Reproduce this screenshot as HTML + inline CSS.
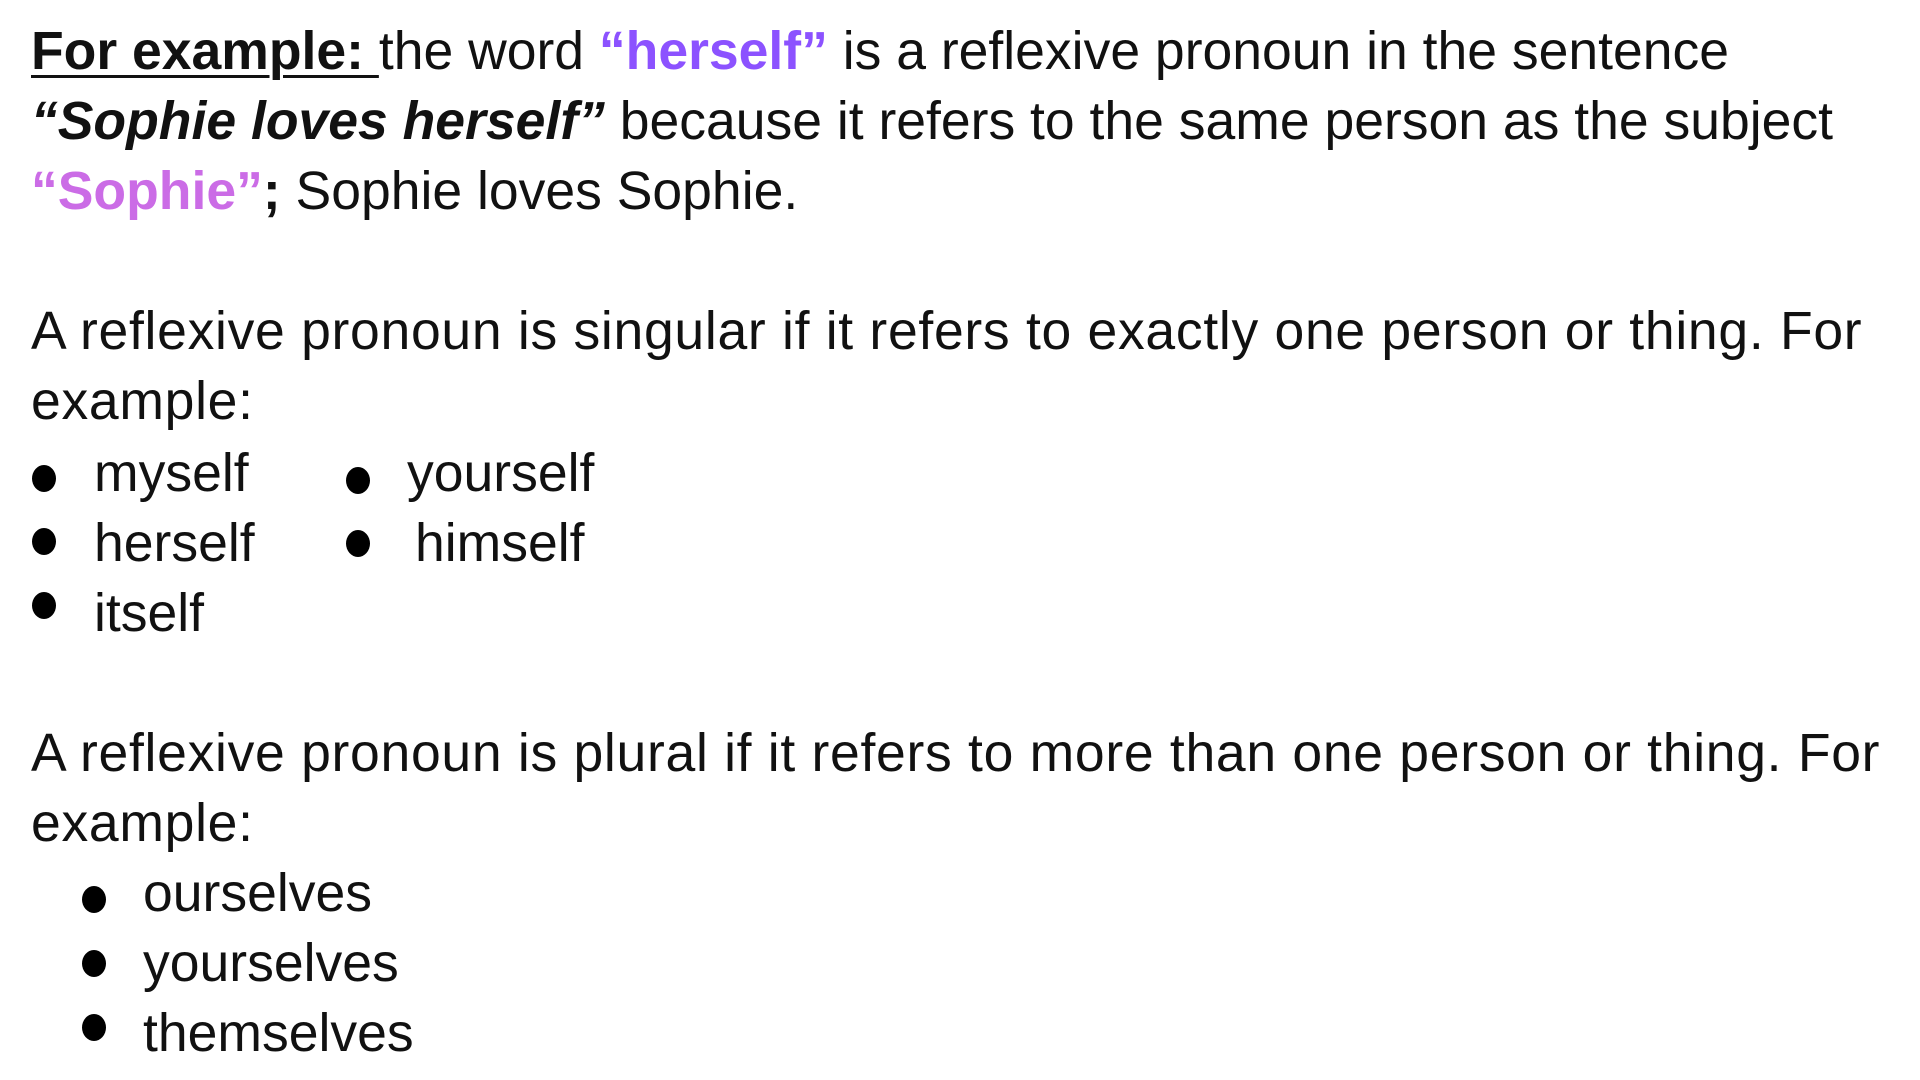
<!DOCTYPE html>
<html><head><meta charset="utf-8"><style>
html,body{margin:0;padding:0;background:#fff;}
body{width:1920px;height:1080px;position:relative;overflow:hidden;font-family:"Liberation Sans",sans-serif;font-size:53.5px;color:#111;}
.l{position:absolute;line-height:70px;white-space:nowrap;}
.r{letter-spacing:0.7px;}
.u{text-decoration:underline;text-decoration-thickness:3px;text-underline-offset:6px;font-weight:bold;}
.p1{color:#8c52ff;font-weight:bold;}
.p2{color:#cb6ce6;font-weight:bold;}
.d{position:absolute;width:24px;height:27px;border-radius:50%;background:#000;}
</style></head><body>
<div class="l" style="left:31px;top:17px"><span class="u">For example: </span>the word <span class="p1">“herself”</span> is a reflexive pronoun in the sentence</div>
<div class="l" style="left:31px;top:87px"><b><i>“Sophie loves herself”</i></b> because it refers to the same person as the subject</div>
<div class="l" style="left:31px;top:157px"><span class="p2">“Sophie”</span><b>;</b> Sophie loves Sophie.</div>
<div class="l r" style="left:31px;top:297px">A reflexive pronoun is singular if it refers to exactly one person or thing. For</div>
<div class="l r" style="left:31px;top:367px">example:</div>
<div class="d" style="left:32px;top:465px"></div><div class="l" style="left:94px;top:439px">myself</div>
<div class="d" style="left:32px;top:528px"></div><div class="l" style="left:94px;top:509px">herself</div>
<div class="d" style="left:32px;top:592px"></div><div class="l" style="left:94px;top:579px">itself</div>
<div class="d" style="left:346px;top:467px"></div><div class="l" style="left:407px;top:439px">yourself</div>
<div class="d" style="left:346px;top:530px"></div><div class="l" style="left:415px;top:509px">himself</div>
<div class="l r" style="left:31px;top:719px">A reflexive pronoun is plural if it refers to more than one person or thing. For</div>
<div class="l r" style="left:31px;top:789px">example:</div>
<div class="d" style="left:82px;top:886px"></div><div class="l" style="left:143px;top:859px">ourselves</div>
<div class="d" style="left:82px;top:950px"></div><div class="l" style="left:143px;top:929px">yourselves</div>
<div class="d" style="left:82px;top:1014px"></div><div class="l" style="left:143px;top:999px">themselves</div>
</body></html>
